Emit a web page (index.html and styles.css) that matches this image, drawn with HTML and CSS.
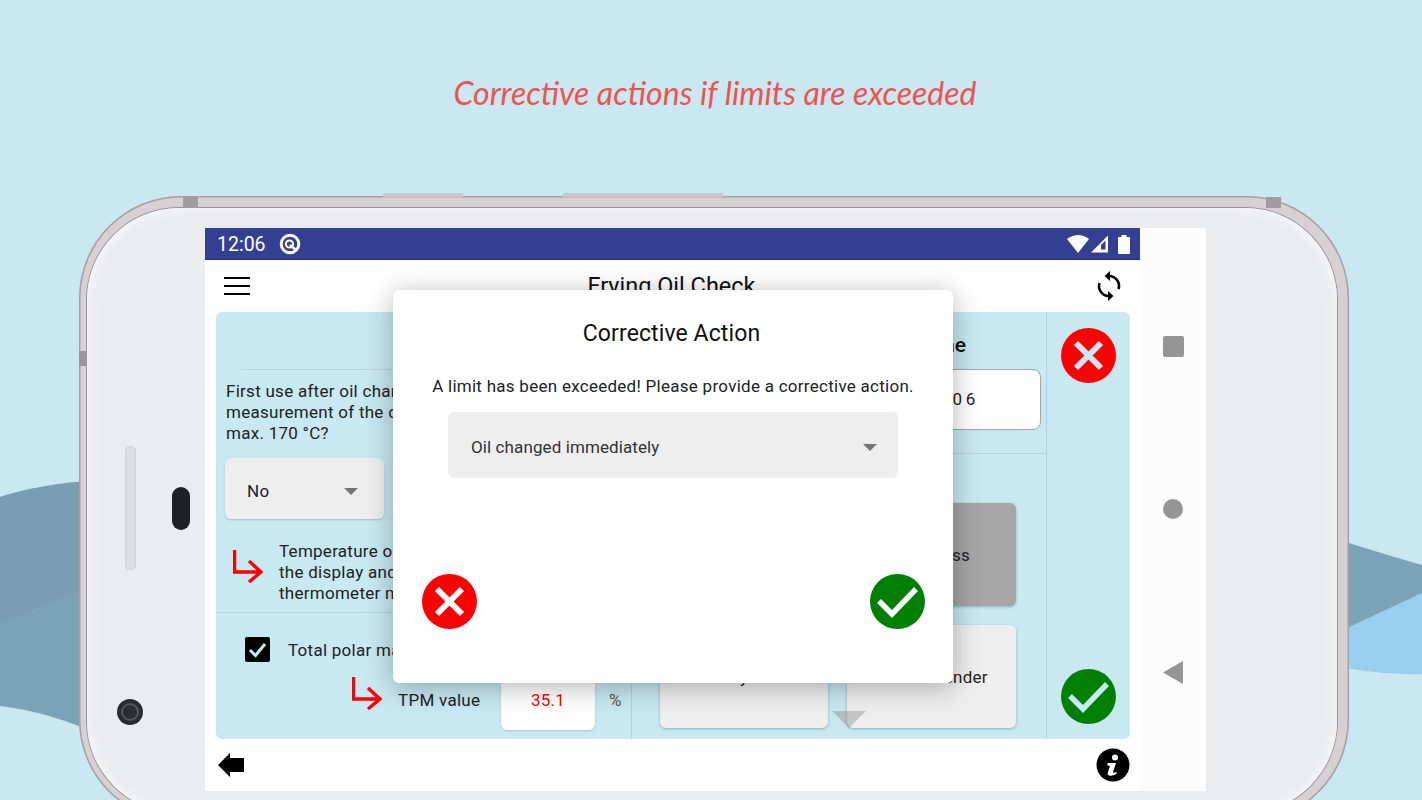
FILE: index.html
```html
<!DOCTYPE html>
<html lang="en">
<head>
  <meta charset="UTF-8">
  <meta name="viewport" content="width=device-width, initial-scale=1.0">
  <title>Corrective actions if limits are exceeded</title>
  <link rel="stylesheet" href="styles.css">
</head>
<body>
  <!-- background waves -->
  <svg class="waves" viewBox="0 0 1422 800">
    <path fill="#7ca4b9" d="M0 497 Q40 484 100 480 V735 Q50 712 0 706Z"/>
    <path fill="#7b9db1" d="M0 497 Q40 484 100 480 V581 L0 624Z"/>
    <path fill="#97cfec" d="M1300 600 L1422 593 V674 Q1380 676 1300 660Z"/>
    <path fill="#7ca4b9" d="M1300 530 L1349 543 Q1390 556 1422 565 V593 L1349 627 L1300 650Z"/>
  </svg>

  <h1 class="headline">Corrective actions if limits are exceeded</h1>

  <div class="phone">
    <span class="top-key key-a"></span>
    <span class="top-key key-b"></span>
    <div class="phone-body"></div>
    <span class="band band-left"></span>
    <span class="band band-right"></span>
    <span class="side-key"></span>
    <span class="speaker"></span>
    <span class="sensor"></span>
    <span class="camera"><i></i></span>

    <div class="screen">
      <div class="app">
        <div class="status-bar">
          <span class="clock">12:06</span>
          <svg class="status-app" width="22" height="22" viewBox="0 0 22 22">
            <circle cx="11" cy="11" r="8.8" fill="none" stroke="#fff" stroke-width="3"/>
            <circle cx="10.500" cy="11" r="3.600" fill="none" stroke="#fff" stroke-width="2"/>
            <path d="M11 12 L17 17" stroke="#fff" stroke-width="2.400"/>
          </svg>
          <span class="status-right">
            <svg width="22" height="20" viewBox="0 0 22 20"><path fill="#fff" d="M0 5 Q11 -3 22 5 L11 19Z"/></svg>
            <svg width="18" height="18" viewBox="0 0 18 18"><path fill="#fff" d="M0 17.500 L17 0.500 V17.500Z"/><path fill="#333f91" d="M10 10 L14.500 5.500 V14.500 H10Z"/></svg>
            <svg class="battery" width="12" height="19" viewBox="0 0 12 19"><path fill="#fff" d="M3.500 0 H8.500 V2 H11 Q12 2 12 3 V18 Q12 19 11 19 H1 Q0 19 0 18 V3 Q0 2 1 2 H3.500Z"/></svg>
          </span>
        </div>

        <div class="toolbar">
          <span class="burger"><i></i><i></i><i></i></span>
          <span class="toolbar-title">Frying Oil Check</span>
          <svg width="26" height="32" viewBox="0 0 26 32">
            <g fill="none" stroke="#000" stroke-width="2.600">
              <path d="M13 6 A10 10 0 0 1 22.500 19"/>
              <path d="M13 26 A10 10 0 0 1 3.500 13"/>
            </g>
            <path d="M14 1 V11 L8.500 6Z"/>
            <path d="M12 21 V31 L17.500 26Z"/>
          </svg>
        </div>

        <div class="panel">
          <div class="col col-left">
            <div class="col-head"></div>
            <p class="question">First use after oil change:<br>measurement of the oil temperature<br>max. 170 °C?</p>
            <div class="select select-small"><span>No</span><i class="caret"></i></div>
            <div class="sub-row">
              <svg class="red-arrow" width="30" height="34" viewBox="0 0 30 34">
                <path fill="none" stroke="#f00" stroke-width="3.500" d="M1.500 0 V22 H28 M16 11 L28 22 L16 32"/>
              </svg>
              <p>Temperature of the oil on<br>the display and on the<br>thermometer match?</p>
            </div>
            <div class="tpm">
              <div class="check-row">
                <svg width="25" height="25" viewBox="0 0 25 25">
                  <rect width="25" height="25" rx="2"/>
                  <path fill="none" stroke="#c8e8f2" stroke-width="3" d="M5 13 L10.500 18.500 L20 7"/>
                </svg>
                <span>Total polar materials</span>
              </div>
              <div class="value-row">
                <svg class="red-arrow" width="30" height="34" viewBox="0 0 30 34">
                  <path fill="none" stroke="#f00" stroke-width="3.500" d="M1.500 0 V22 H28 M16 11 L28 22 L16 32"/>
                </svg>
                <span class="value-label">TPM value</span>
                <span class="value-box">35.1</span>
                <span class="value-unit">%</span>
              </div>
            </div>
          </div>

          <div class="col col-mid">
            <div class="date-block">
              <h2>Measurement date and time</h2>
              <div class="date-input">Tuesday, 15.10.2019 12:06</div>
            </div>
            <div class="choices">
              <div class="choice">Fries</div>
              <div class="choice choice-on">Breadless</div>
              <div class="choice">Fryer</div>
              <div class="choice choice-last">Chicken tender</div>
            </div>
            <span class="scroll-hint"></span>
          </div>

          <div class="col-actions">
            <svg width="55" height="55" viewBox="0 0 55 55">
              <circle cx="27.500" cy="27.500" r="27.500" fill="#f00"/>
              <path fill="none" stroke="#c8e8f2" stroke-width="6" d="M15 15 L40 40 M40 15 L15 40"/>
            </svg>
            <svg width="55" height="55" viewBox="0 0 55 55">
              <circle cx="27.500" cy="27.500" r="27.500" fill="#008000"/>
              <path fill="none" stroke="#c8e8f2" stroke-width="5.500" d="M9 27 L22 40 L46 15"/>
            </svg>
          </div>
        </div>

        <div class="bottom-bar">
          <svg width="26" height="24" viewBox="0 0 26 24"><path d="M0 12 L12 0 V5 H26 V19 H12 V24Z"/></svg>
          <svg width="34" height="34" viewBox="0 0 34 34">
            <circle cx="17" cy="17" r="16.500"/>
            <circle cx="19" cy="9.500" r="3" fill="#fff"/>
            <path fill="#fff" d="M11.500 15 H20 L17 24 Q17 25.500 20.500 24 L20.500 26 Q16 28.500 13 27.500 Q11 26.500 12 24 L14 18 Q12.500 17.500 11.500 17.500Z"/>
          </svg>
        </div>
      </div>

      <div class="nav-rail">
        <span class="nav-square"></span>
        <span class="nav-circle"></span>
        <svg width="21" height="23" viewBox="0 0 21 23"><path fill="#959595" d="M0 11.500 L20 0 V23Z"/></svg>
      </div>

      <div class="dialog">
        <h3>Corrective Action</h3>
        <p>A limit has been exceeded! Please provide a corrective action.</p>
        <div class="select select-wide"><span>Oil changed immediately</span><i class="caret"></i></div>
        <div class="dialog-actions">
          <svg width="55" height="55" viewBox="0 0 55 55">
            <circle cx="27.500" cy="27.500" r="27.500" fill="#f00"/>
            <path fill="none" stroke="#fff" stroke-width="6" d="M15 15 L40 40 M40 15 L15 40"/>
          </svg>
          <svg width="55" height="55" viewBox="0 0 55 55">
            <circle cx="27.500" cy="27.500" r="27.500" fill="#008000"/>
            <path fill="none" stroke="#fff" stroke-width="5.500" d="M9 27 L22 40 L46 15"/>
          </svg>
        </div>
      </div>
    </div>
  </div>
</body>
</html>
```

FILE: styles.css
```css
html, body {
  margin: 0;
  padding: 0;
  width: 1422px;
  height: 800px;
  overflow: hidden;
}
body {
  position: relative;
  background: #c9e8f2;
  font-family: Roboto, sans-serif;
  color: #222;
}
p, h1, h2, h3 {
  margin: 0;
}
.waves {
  position: absolute;
  top: 0;
  left: 0;
  width: 1422px;
  height: 800px;
}
.headline {
  position: absolute;
  top: 70px;
  left: 0;
  width: 1430px;
  text-align: center;
  font-family: Lato, sans-serif;
  font-style: italic;
  font-weight: 400;
  font-size: 32px;
  line-height: 46px;
  color: #ef5350;
}

/* phone shell */
.phone {
  position: absolute;
  left: 79px;
  top: 196px;
  width: 1270px;
  height: 626px;
  border-radius: 102px;
  background: #d8d1d4;
  box-shadow: inset 0 0 0 1.500px #a69fa3;
}
.phone-body {
  position: absolute;
  top: 12px;
  left: 8px;
  right: 12px;
  bottom: 9px;
  border-radius: 92px;
  background: #ebecee;
  box-shadow: 0 0 0 1px #9a9498, inset 0 0 10px 4px #f6f6f7;
}
.top-key {
  position: absolute;
  top: -3px;
  height: 4px;
  background: #cbc6c8;
}
.key-a {
  left: 304px;
  width: 80px;
}
.key-b {
  left: 484px;
  width: 160px;
}
.band {
  position: absolute;
  top: 1px;
  width: 15px;
  height: 11px;
  background: #a39b9f;
}
.band-left {
  left: 104px;
}
.band-right {
  left: 1187px;
}
.side-key {
  position: absolute;
  left: 0;
  top: 155px;
  width: 7px;
  height: 15px;
  background: #9c9497;
}
.speaker {
  position: absolute;
  left: 46px;
  top: 250px;
  width: 11px;
  height: 124px;
  border-radius: 6px;
  background: #dcdee2;
  box-shadow: inset 0 0 0 1px #cfd1d5;
}
.sensor {
  position: absolute;
  left: 93px;
  top: 291px;
  width: 18px;
  height: 43px;
  border-radius: 9px;
  background: #1e2024;
}
.camera {
  position: absolute;
  left: 38px;
  top: 503px;
  width: 26px;
  height: 26px;
  border-radius: 50%;
  background: #2a2b2f;
  display: flex;
  align-items: center;
  justify-content: center;
}
.camera i {
  width: 14px;
  height: 14px;
  border-radius: 50%;
  background: #2c2d33;
  box-shadow: 0 0 0 2px #55575c;
}

/* screen */
.screen {
  position: absolute;
  left: 126px;
  top: 32px;
  width: 1001px;
  height: 563px;
  display: flex;
}
.app {
  width: 935px;
  display: flex;
  flex-direction: column;
  background: #fff;
}
.nav-rail {
  width: 66px;
  background: #fcfcfc;
  display: flex;
  flex-direction: column;
  align-items: center;
  padding: 108px 0 107px 0;
  box-sizing: border-box;
  justify-content: space-between;
}
.nav-square {
  width: 21px;
  height: 21px;
  border-radius: 2px;
  background: #959595;
}
.nav-circle {
  width: 20px;
  height: 20px;
  border-radius: 50%;
  background: #959595;
}
.status-bar {
  height: 32px;
  box-sizing: border-box;
  background: #333f91;
  border-bottom: 1px solid #1f2c8c;
  color: #fff;
  display: flex;
  align-items: center;
  padding: 1px 10px 0 12px;
}
.clock {
  font-size: 19.500px;
}
.status-app {
  margin-left: 13px;
}
.status-right {
  margin-left: auto;
  display: flex;
  align-items: center;
  gap: 2px;
}
.battery {
  margin-left: 7px;
}
.toolbar {
  height: 52px;
  display: flex;
  align-items: center;
  justify-content: space-between;
  padding: 0 18px 0 19px;
  position: relative;
}
.toolbar-title {
  position: absolute;
  left: -2px;
  right: 0;
  text-align: center;
  font-size: 23.500px;
  color: #111;
}
.burger {
  display: flex;
  flex-direction: column;
  gap: 5.500px;
}
.burger i {
  display: block;
  width: 26px;
  height: 2.500px;
  background: #000;
}
.panel {
  flex: 1;
  margin: 0 10px 0 11px;
  background: #c8e8f2;
  border-radius: 6px;
  display: flex;
  min-height: 0;
}
.bottom-bar {
  height: 52px;
  display: flex;
  align-items: center;
  justify-content: space-between;
  padding: 0 10px 0 13px;
}

/* left column */
.col {
  width: 415px;
  box-sizing: border-box;
  border-right: 1px solid #b8d2db;
  display: flex;
  flex-direction: column;
  position: relative;
  font-size: 17px;
  letter-spacing: 0.270px;
  line-height: 21px;
}
.col-left {
  width: 416px;
}
.col-head {
  height: 57px;
  margin-left: 25px;
  border-bottom: 1px solid #b8d2db;
  flex: none;
}
.question {
  padding: 11px 0 0 10px;
  white-space: nowrap;
}
.select {
  display: flex;
  align-items: center;
  justify-content: space-between;
  background: #eee;
  border-radius: 6px;
  box-sizing: border-box;
}
.select-small {
  width: 159px;
  height: 61px;
  margin: 14px 0 0 9px;
  padding: 6px 26px 0 22px;
  box-shadow: 0 1px 2px rgba(0, 0, 0, 0.2);
}
.caret {
  width: 0;
  height: 0;
  border-left: 7px solid transparent;
  border-right: 7px solid transparent;
  border-top: 7px solid #757575;
}
.sub-row {
  display: flex;
  align-items: center;
  margin-top: 22px;
  padding-bottom: 8px;
  border-bottom: 1px solid #b8d2db;
  white-space: nowrap;
}
.sub-row .red-arrow {
  margin: 0 16px 12px 17px;
}
.tpm {
  flex: 1;
  position: relative;
}
.check-row {
  display: flex;
  align-items: center;
  gap: 18px;
  padding: 24px 0 0 29px;
}
.check-row span {
  padding-top: 2px;
}
.value-row {
  display: flex;
  align-items: center;
  margin: 8px 0 0 136px;
}
.value-row .red-arrow {
  margin-bottom: 12px;
}
.value-label {
  margin-left: 16px;
  width: 103px;
}
.value-box {
  width: 94px;
  height: 60px;
  background: #fff;
  border-radius: 6px;
  color: #f00;
  display: flex;
  align-items: center;
  justify-content: center;
  box-shadow: 0 1px 2px rgba(0, 0, 0, 0.15);
}
.value-unit {
  margin-left: 14px;
  color: #555;
}

/* middle column */
.date-block {
  height: 142px;
  box-sizing: border-box;
  border-bottom: 1px solid #b8d2db;
  padding: 20px 5px 0 5px;
  flex: none;
}
.date-block h2 {
  text-align: center;
  font-size: 21px;
  font-weight: 500;
  letter-spacing: 0;
  line-height: 26px;
  color: #111;
  white-space: nowrap;
  padding-right: 10px;
}
.date-input {
  height: 61px;
  margin-top: 11px;
  padding-right: 10px;
  box-sizing: border-box;
  background: #fff;
  border: 1.500px solid #a5a5a5;
  border-radius: 8px;
  display: flex;
  align-items: center;
  justify-content: center;
  letter-spacing: 3.500px;
  white-space: nowrap;
}
.choices {
  display: grid;
  grid-template-columns: 168px 169px;
  grid-auto-rows: 103px;
  gap: 19px;
  padding: 49px 0 0 28px;
}
.choice {
  background: #eee;
  border-radius: 6px;
  display: flex;
  align-items: center;
  justify-content: center;
  padding-top: 2px;
  box-sizing: border-box;
  box-shadow: 0 1px 3px rgba(0, 0, 0, 0.25);
}
.choice-on {
  background: #a6a6a6;
}
.choice-last {
  padding-right: 4px;
}
.scroll-hint {
  position: absolute;
  left: 200px;
  top: 399px;
  width: 0;
  height: 0;
  border-left: 17px solid transparent;
  border-right: 17px solid transparent;
  border-top: 17px solid rgba(120, 120, 120, 0.35);
}

/* action column */
.col-actions {
  flex: 1;
  display: flex;
  flex-direction: column;
  justify-content: space-between;
  align-items: center;
  padding: 16px 0 15px 0;
}

/* dialog */
.dialog {
  position: absolute;
  left: 188px;
  top: 62px;
  width: 560px;
  height: 393px;
  box-sizing: border-box;
  background: #fff;
  border-radius: 6px;
  box-shadow: 0 4px 28px rgba(0, 0, 0, 0.3);
  display: flex;
  flex-direction: column;
  align-items: center;
  padding-top: 29px;
}
.dialog h3 {
  font-size: 23px;
  font-weight: 400;
  letter-spacing: 0.100px;
  line-height: 30px;
  color: #111;
  margin-right: 3px;
}
.dialog p {
  margin-top: 26px;
  font-size: 17px;
  letter-spacing: 0.270px;
  line-height: 22px;
}
.select-wide {
  width: 450px;
  height: 66px;
  margin-top: 15px;
  padding: 4px 21px 0 23px;
  font-size: 17px;
  letter-spacing: 0.100px;
  color: #333;
}
.dialog-actions {
  align-self: stretch;
  display: flex;
  justify-content: space-between;
  padding: 0 28px 0 29px;
  margin-top: 96px;
}
```
